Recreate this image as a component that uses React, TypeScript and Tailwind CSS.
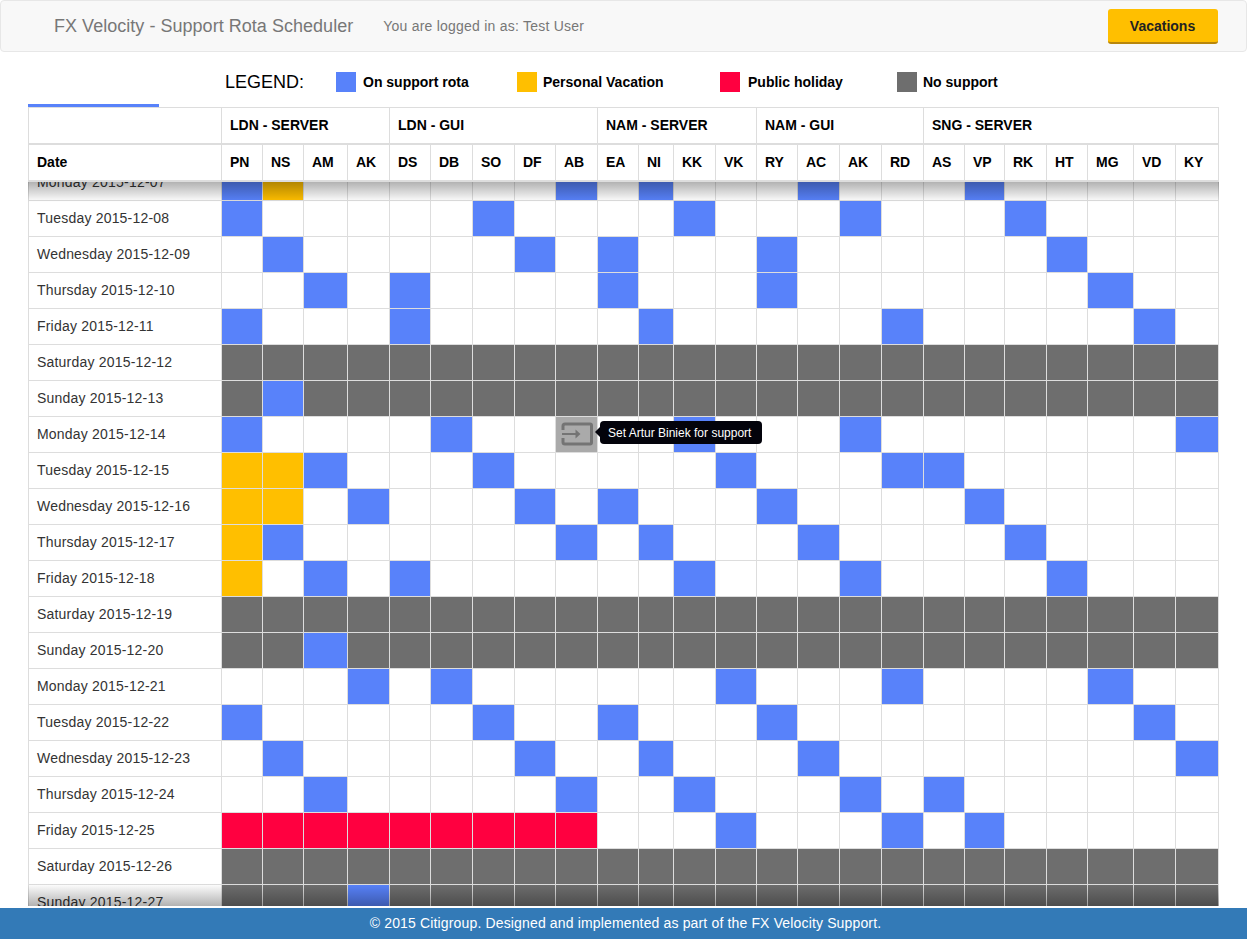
import React from "react";

const widths = [194,41,41,44,42,41,42,42,41,42,41,35,42,41,41,42,42,42,41,40,42,41,46,42,43];
const people = ["PN","NS","AM","AK","DS","DB","SO","DF","AB","EA","NI","KK","VK","RY","AC","AK","RD","AS","VP","RK","HT","MG","VD","KY"];
const groups: [string, number][] = [["LDN - SERVER",4],["LDN - GUI",5],["NAM - SERVER",4],["NAM - GUI",4],["SNG - SERVER",7]];
const cols = "193px " + widths.slice(1).map((w) => w + "px").join(" ");

type Row = { d: string; b: number[]; y?: number[]; r?: number[]; grey?: boolean; hover?: number };
const rows: Row[] = [
  { d: "Monday 2015-12-07", b: [0,8,10,14,18], y: [1] },
  { d: "Tuesday 2015-12-08", b: [0,6,11,15,19] },
  { d: "Wednesday 2015-12-09", b: [1,7,9,13,20] },
  { d: "Thursday 2015-12-10", b: [2,4,9,13,21] },
  { d: "Friday 2015-12-11", b: [0,4,10,16,22] },
  { d: "Saturday 2015-12-12", b: [], grey: true },
  { d: "Sunday 2015-12-13", b: [1], grey: true },
  { d: "Monday 2015-12-14", b: [0,5,11,15,23], hover: 8 },
  { d: "Tuesday 2015-12-15", b: [2,6,12,16,17], y: [0,1] },
  { d: "Wednesday 2015-12-16", b: [3,7,9,13,18], y: [0,1] },
  { d: "Thursday 2015-12-17", b: [1,8,10,14,19], y: [0] },
  { d: "Friday 2015-12-18", b: [2,4,11,15,20], y: [0] },
  { d: "Saturday 2015-12-19", b: [], grey: true },
  { d: "Sunday 2015-12-20", b: [2], grey: true },
  { d: "Monday 2015-12-21", b: [3,5,12,16,21] },
  { d: "Tuesday 2015-12-22", b: [0,6,9,13,22] },
  { d: "Wednesday 2015-12-23", b: [1,7,10,14,23] },
  { d: "Thursday 2015-12-24", b: [2,8,11,15,17] },
  { d: "Friday 2015-12-25", b: [12,16,18], r: [0,1,2,3,4,5,6,7,8] },
  { d: "Saturday 2015-12-26", b: [], grey: true },
  { d: "Sunday 2015-12-27", b: [3], grey: true },
];

function Cell({ row, i }: { row: Row; i: number }) {
  let bg = "bg-white";
  if (row.grey) bg = "bg-[#6e6e6e]";
  if (row.r?.includes(i)) bg = "bg-[#ff0040]";
  if (row.y?.includes(i)) bg = "bg-[#ffbf00]";
  if (row.b.includes(i)) bg = "bg-[#5882fa]";
  if (row.hover === i) {
    return (
      <div className="relative h-[36px] border-r border-b border-[#dddddd] bg-[#aaaaaa]">
        <svg viewBox="0 0 32 24" className="absolute left-[5px] top-[5px] h-[24px] w-[32px]" fill="none" stroke="#747474" strokeWidth="3">
          <path d="M2 8V4a2 2 0 0 1 2-2h25a1.5 1.5 0 0 1 1.5 1.5v17a1.5 1.5 0 0 1-1.5 1.5H4a2 2 0 0 1-2-2v-4" />
          <path d="M1 12h17" strokeWidth="2" />
          <path d="M14.5 7.5v9l5-4.5z" fill="#747474" stroke="none" />
        </svg>
        <div className="absolute left-[44px] top-[4px] z-20 flex h-[23px] w-[162px] items-center whitespace-nowrap rounded-[4px] bg-[#03030b] pl-[8px] text-[12px] text-white">
          <span className="absolute left-[-5px] top-[6px] h-0 w-0 border-y-[5px] border-r-[5px] border-y-transparent border-r-[#03030b]" />
          Set Artur Biniek for support
        </div>
      </div>
    );
  }
  return <div className={`h-[36px] border-r border-b border-[#dddddd] ${bg}`} />;
}

function Legend({ color, label, className }: { color: string; label: string; className: string }) {
  return (
    <div className={`flex items-center ${className}`}>
      <span className={`h-[20px] w-[20px] ${color}`} />
      <span className="text-[14px] font-bold text-[#000000]">{label}</span>
    </div>
  );
}

export default function App() {
  return (
    <div className="relative flex h-[939px] w-[1247px] flex-col overflow-hidden bg-white text-[14px] text-[#333333] [font-family:'Liberation_Sans',Arial,sans-serif]">
      <nav className="flex h-[52px] shrink-0 items-center rounded-[4px] border border-[#e7e7e7] bg-[#f8f8f8] pl-[53px] pr-[28px]">
        <span className="text-[18px] tracking-[0.03px] text-[#777777]">FX Velocity - Support Rota Scheduler</span>
        <span className="ml-[30px] text-[14px] tracking-[0.23px] text-[#777777]">You are logged in as: Test User</span>
        <button className="ml-auto h-[35px] w-[110px] rounded-[3px] border-b-2 border-[#b8860b] bg-[#ffbf00] pt-[2px] pr-[1px] text-[14px] font-bold text-[#222222]">Vacations</button>
      </nav>

      <div className="flex h-[52px] shrink-0 items-center pl-[225px] pt-[8px]">
        <span className="w-[111px] text-[18px] text-[#000000]">LEGEND:</span>
        <Legend color="bg-[#5882fa] mr-[7px]" label="On support rota" className="w-[181px]" />
        <Legend color="bg-[#ffbf00] mr-[6px]" label="Personal Vacation" className="w-[203px]" />
        <Legend color="bg-[#ff0040] mr-[8px]" label="Public holiday" className="w-[177px]" />
        <Legend color="bg-[#6e6e6e] mr-[6px]" label="No support" className="" />
      </div>

      <div className="ml-[28px] h-[3px] w-[131px] shrink-0 bg-[#5882fa]" />

      <div className="ml-[28px] w-[1191px] shrink-0 border-l border-[#dddddd] font-bold text-[#000000]">
        <div className="grid h-[38px] border-t border-b-2 border-[#dddddd] bg-white" style={{ gridTemplateColumns: "193px 168px 208px 159px 167px 295px" }}>
          <div className="border-r border-[#dddddd]" />
          {groups.map(([g]) => (
            <div key={g} className="flex items-center border-r border-[#dddddd] pl-[8px]">{g}</div>
          ))}
        </div>
        <div className="grid h-[37px] border-b-2 border-[#dddddd] bg-white" style={{ gridTemplateColumns: cols }}>
          <div className="flex items-center border-r border-[#dddddd] pl-[8px]">Date</div>
          {people.map((p, i) => (
            <div key={i} className="flex items-center border-r border-[#dddddd] pl-[8px]">{p}</div>
          ))}
        </div>
      </div>

      <div className="relative ml-[28px] h-[724px] w-[1191px] shrink-0 overflow-hidden">
        <div className="mt-[-17px] border-l border-[#dddddd]">
          {rows.map((row) => (
            <div key={row.d} className="grid" style={{ gridTemplateColumns: cols }}>
              <div className="flex h-[36px] items-center border-r border-b border-[#dddddd] bg-white pl-[8px] tracking-[0.2px]">{row.d}</div>
              {people.map((_, i) => (
                <Cell key={i} row={row} i={i} />
              ))}
            </div>
          ))}
        </div>
        <div className="pointer-events-none absolute inset-x-0 top-0 h-[20px] bg-gradient-to-b from-[rgba(0,0,0,0.3)] to-transparent" />
        <div className="pointer-events-none absolute inset-x-0 bottom-0 h-[22px] bg-gradient-to-t from-[rgba(0,0,0,0.3)] to-transparent" />
      </div>

      <footer className="mt-auto flex h-[31px] shrink-0 items-center justify-center bg-[#337ab7] pb-[1px] pl-[4px] text-[14px] tracking-[0.15px] text-white">
        © 2015 Citigroup. Designed and implemented as part of the FX Velocity Support.
      </footer>
    </div>
  );
}
